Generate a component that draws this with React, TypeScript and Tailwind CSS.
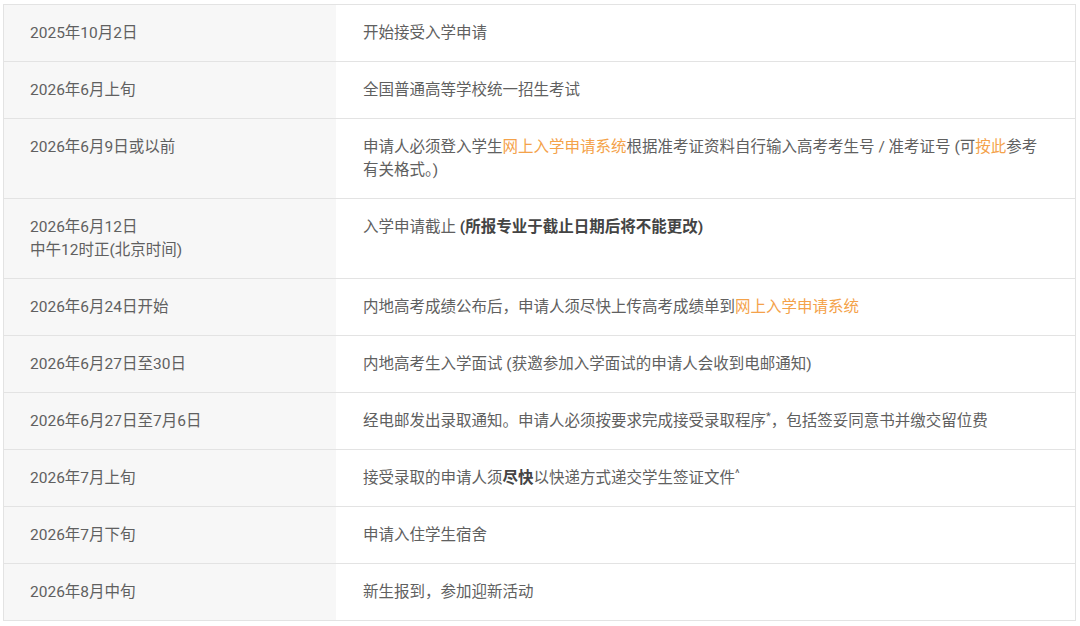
import { FC, ReactNode } from 'react';

type Row = { date: ReactNode; text: ReactNode };

const Link: FC<{ children: ReactNode }> = ({ children }) => (
  <span className="text-[#f4a24a]">{children}</span>
);

const rows: Row[] = [
  { date: '2025年10月2日', text: '开始接受入学申请' },
  { date: '2026年6月上旬', text: '全国普通高等学校统一招生考试' },
  {
    date: '2026年6月9日或以前',
    text: (
      <>
        申请人必须登入学生<Link>网上入学申请系统</Link>根据准考证资料自行输入高考考生号 / 准考证号 (可<Link>按此</Link>参考有关格式。)
      </>
    ),
  },
  {
    date: (
      <>
        2026年6月12日
        <br />
        中午12时正(北京时间)
      </>
    ),
    text: (
      <>
        入学申请截止 <b className="font-bold text-[#444]">(所报专业于截止日期后将不能更改)</b>
      </>
    ),
  },
  {
    date: '2026年6月24日开始',
    text: (
      <>
        内地高考成绩公布后，申请人须尽快上传高考成绩单到<Link>网上入学申请系统</Link>
      </>
    ),
  },
  { date: '2026年6月27日至30日', text: '内地高考生入学面试 (获邀参加入学面试的申请人会收到电邮通知)' },
  {
    date: '2026年6月27日至7月6日',
    text: (
      <>
        经电邮发出录取通知。申请人必须按要求完成接受录取程序<sup className="text-[11px] leading-none">*</sup>，包括签妥同意书并缴交留位费
      </>
    ),
  },
  {
    date: '2026年7月上旬',
    text: (
      <>
        接受录取的申请人须<b className="font-bold text-[#444]">尽快</b>以快递方式递交学生签证文件<sup className="text-[11px] leading-none">^</sup>
      </>
    ),
  },
  { date: '2026年7月下旬', text: '申请入住学生宿舍' },
  { date: '2026年8月中旬', text: '新生报到，参加迎新活动' },
];

export default function App() {
  return (
    <div
      className="h-[626px] w-[1080px] overflow-hidden bg-white pt-[4px] pl-[3px]"
      style={{ fontFamily: 'Roboto, "Noto Sans CJK SC", sans-serif' }}
    >
      <div className="w-[1073px] border-t border-r border-l border-[#e3e3e3] text-[15.5px] leading-[23px] text-[#606060]">
        {rows.map((row, i) => (
          <div key={i} className="flex border-b border-[#e3e3e3]">
            <div className="w-[332px] shrink-0 bg-[#f7f7f7] py-[16.5px] pl-[26px]">{row.date}</div>
            <div className="flex-1 py-[16.5px] pr-[26px] pl-[27px]">{row.text}</div>
          </div>
        ))}
      </div>
    </div>
  );
}
